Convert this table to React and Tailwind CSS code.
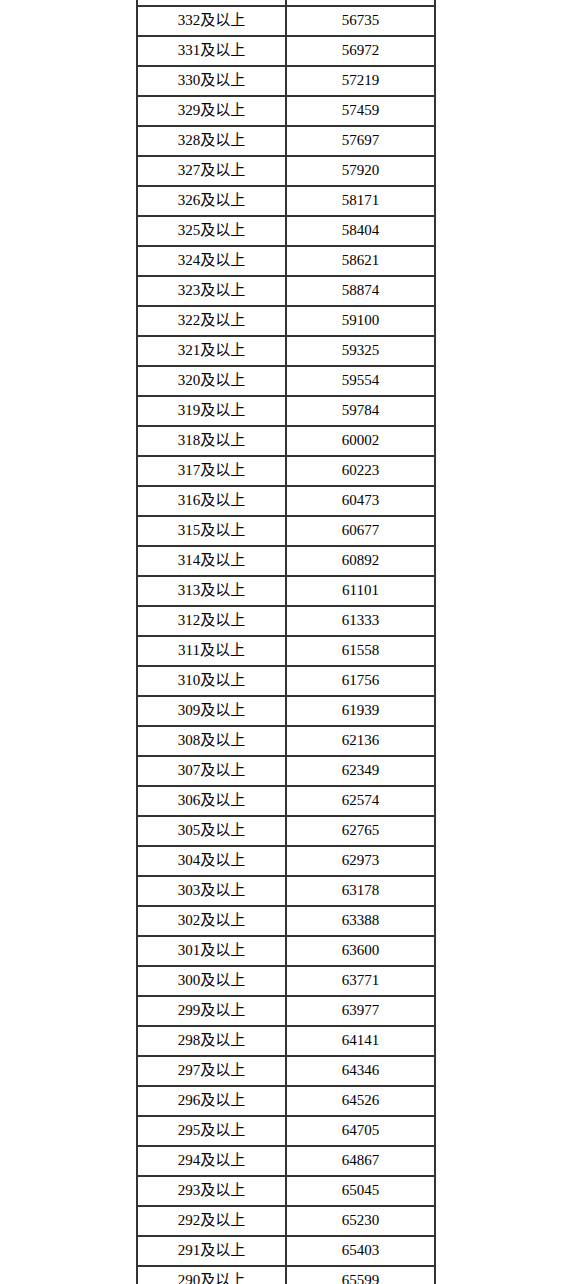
const rows = [
  ['333', '56497'],
  ['332', '56735'],
  ['331', '56972'],
  ['330', '57219'],
  ['329', '57459'],
  ['328', '57697'],
  ['327', '57920'],
  ['326', '58171'],
  ['325', '58404'],
  ['324', '58621'],
  ['323', '58874'],
  ['322', '59100'],
  ['321', '59325'],
  ['320', '59554'],
  ['319', '59784'],
  ['318', '60002'],
  ['317', '60223'],
  ['316', '60473'],
  ['315', '60677'],
  ['314', '60892'],
  ['313', '61101'],
  ['312', '61333'],
  ['311', '61558'],
  ['310', '61756'],
  ['309', '61939'],
  ['308', '62136'],
  ['307', '62349'],
  ['306', '62574'],
  ['305', '62765'],
  ['304', '62973'],
  ['303', '63178'],
  ['302', '63388'],
  ['301', '63600'],
  ['300', '63771'],
  ['299', '63977'],
  ['298', '64141'],
  ['297', '64346'],
  ['296', '64526'],
  ['295', '64705'],
  ['294', '64867'],
  ['293', '65045'],
  ['292', '65230'],
  ['291', '65403'],
  ['290', '65599'],
  ['289', '65781'],
];

export default function App() {
  return (
    <div className="w-[574px] h-[1284px] overflow-hidden bg-white">
      <table
        className="ml-[136px] -mt-[25px] w-[300px] border-collapse text-[15px] text-black"
        style={{ fontFamily: '"Liberation Serif", "Noto Sans CJK SC", serif' }}
      >
        <tbody>
          {rows.map(([score, rank]) => (
            <tr key={score}>
              <td className="h-[30px] w-1/2 border-2 border-[#333] p-0 pb-[2px] text-center align-middle">
                {score}及以上
              </td>
              <td className="h-[30px] w-1/2 border-2 border-[#333] p-0 pb-[2px] text-center align-middle">
                {rank}
              </td>
            </tr>
          ))}
        </tbody>
      </table>
    </div>
  );
}
